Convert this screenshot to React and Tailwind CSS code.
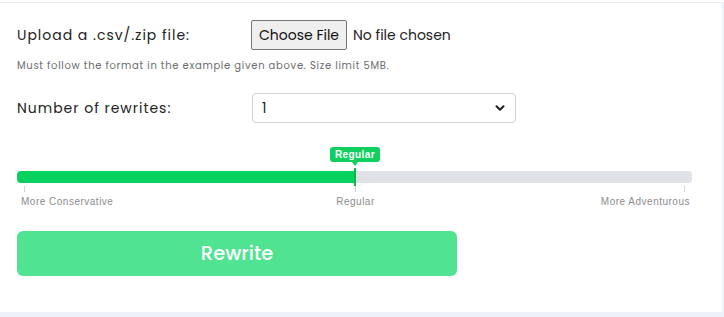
import React, { useState } from 'react';
import { ChevronDown } from 'lucide-react';

const SANS = "font-['Poppins','Lato','Liberation_Sans',sans-serif]";

export default function App() {
  const [rewrites, setRewrites] = useState('1');

  return (
    <div className="w-[724px] h-[317px] flex flex-col bg-[#edf2f8] overflow-hidden">
      <div className="h-[2px] bg-white" />
      <div className={`flex-1 bg-white border-t border-[#ececec] mr-[2px] pl-[17px] ${SANS}`}>
        {/* Upload row */}
        <div className="flex items-center pt-[17px]">
          <label className="w-[234px] text-[14px] tracking-[0.07em] text-[#222]">Upload a .csv/.zip file:</label>
          <button className="h-[30px] w-[96px] border border-[#767676] bg-[#efefef] rounded-[2px] text-[14px] text-[#111]">
            Choose File
          </button>
          <span className="ml-[6px] text-[14px] text-[#222]">No file chosen</span>
        </div>
        <p className="mt-[8px] text-[10px] tracking-[0.07em] text-[#6c6c6c]">
          Must follow the format in the example given above. Size limit 5MB.
        </p>

        {/* Rewrites select */}
        <div className="flex items-center mt-[20px]">
          <label className="w-[235px] text-[14px] tracking-[0.07em] text-[#222]">Number of rewrites:</label>
          <div className="relative w-[264px] h-[30px]">
            <select
              value={rewrites}
              onChange={(e) => setRewrites(e.target.value)}
              className="appearance-none w-full h-full border border-[#cfd4da] rounded-[4px] pl-[9px] text-[14px] text-[#222] bg-white outline-none"
            >
              <option>1</option>
              <option>2</option>
              <option>3</option>
            </select>
            <ChevronDown size={14} strokeWidth={3.5} className="absolute right-[9px] top-[8px] text-[#222] pointer-events-none" />
          </div>
        </div>

        {/* Slider */}
        <div className="mt-[24px] w-[675px] font-['Liberation_Sans',sans-serif]">
          <div className="flex justify-center h-[19px] pl-[1px]">
            <div className="relative h-[15px] px-[5px] rounded-[3px] bg-[#0fcf5e] text-white text-[10px] font-bold tracking-[0.04em] leading-[15px]">
              Regular
              <span className="absolute left-1/2 -translate-x-1/2 top-[15px] w-0 h-0 border-l-[3px] border-r-[3px] border-t-[4px] border-l-transparent border-r-transparent border-t-[#0fcf5e]" />
            </div>
          </div>
          <div className="relative h-[12px] mt-[5px] rounded-[4px] bg-[#dfe3e8]">
            <div className="h-full w-[338px] rounded-l-[4px] bg-[#08d25d]" />
            <div className="absolute left-[337px] top-[-3px] w-[2px] h-[18px] bg-[#06b84f]" />
          </div>
          <div className="flex justify-between mt-[3px] px-[7px]">
            <span className="w-px h-[6px] bg-[#d3d3d3]" />
            <span className="w-px h-[6px] bg-[#d3d3d3] ml-[1px]" />
            <span className="w-px h-[6px] bg-[#d3d3d3]" />
          </div>
          <div className="grid grid-cols-3 mt-[2px] pl-[4px] pr-[2px] text-[10px] tracking-[0.05em] text-[#8c8c8c]">
            <span>More Conservative</span>
            <span className="text-center">Regular</span>
            <span className="text-right">More Adventurous</span>
          </div>
        </div>

        {/* Submit */}
        <button className="mt-[22px] w-[440px] h-[45px] rounded-[6px] bg-[#4fe392] text-white text-[19.5px] font-medium">
          Rewrite
        </button>
      </div>
      <div className="h-[5px]" />
    </div>
  );
}
